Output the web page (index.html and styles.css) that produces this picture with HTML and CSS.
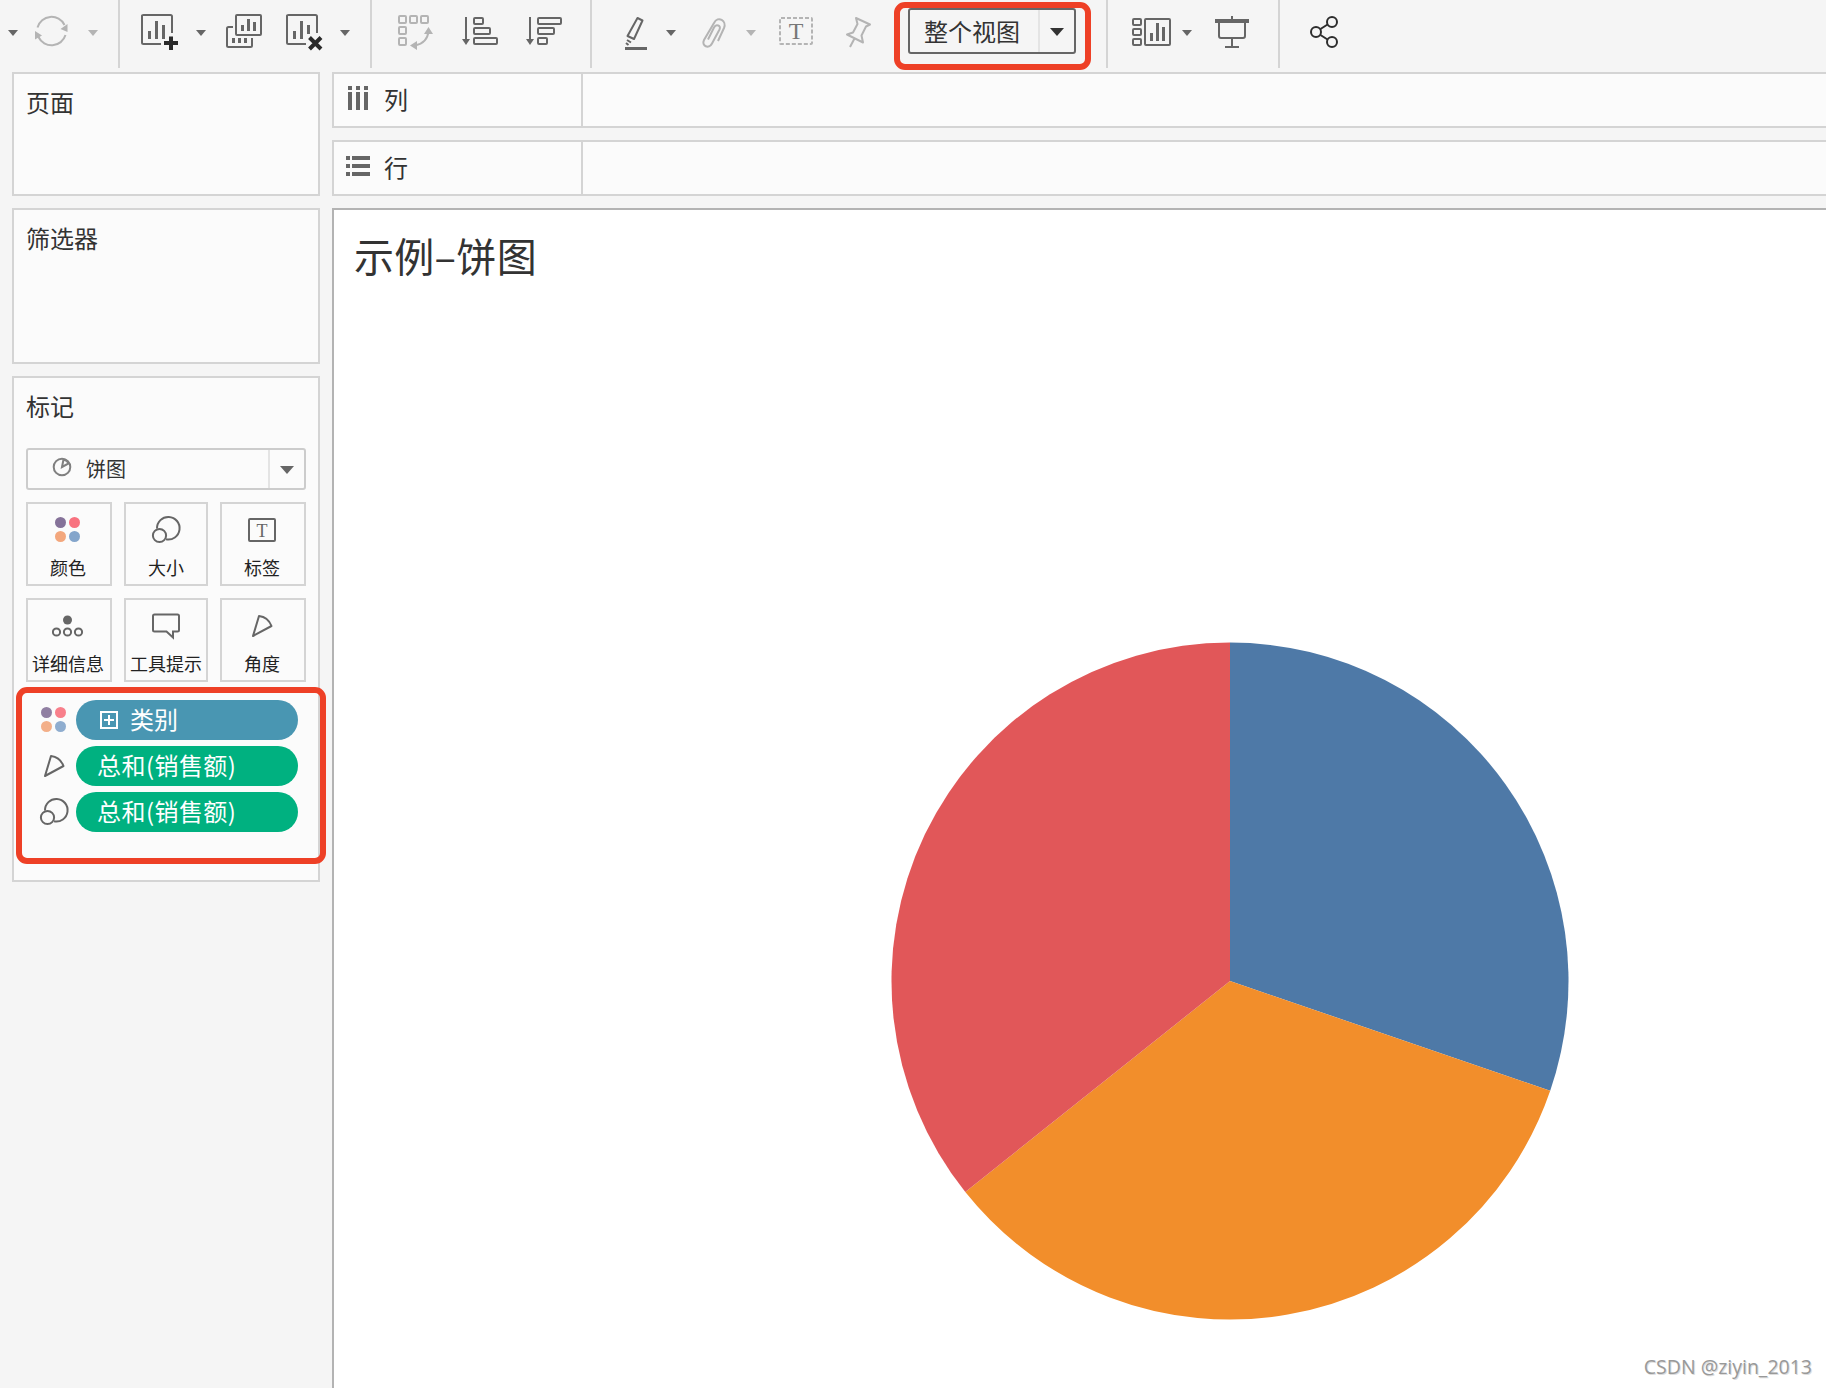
FILE: index.html
```html
<!DOCTYPE html>
<html lang="zh-CN">
<head>
  <meta charset="UTF-8" />
  <meta name="viewport" content="width=device-width, initial-scale=1.0">
  <title>示例–饼图</title>
  <link rel="stylesheet" href="styles.css">
</head>
<body>

  <div class="toolbar">
    <div class="group history">
      <span class="caret"></span>
      <svg class="icon muted" width="36" height="40" viewBox="0 0 36 40">
        <path d="M3.500 15.500A14.500 14.500 0 0 1 30.500 13M31.500 23A14.500 14.500 0 0 1 4.500 25" />
        <path class="fill" d="M26.500 17l7-5v8zM1 19v8.500l7-4z" />
      </svg>
      <span class="caret light"></span>
    </div>

    <div class="group sheets">
      <svg class="icon" width="40" height="40" viewBox="0 0 40 40">
        <path d="M21 32H3.500q-1.500 0-1.500-1.500v-27Q2 3 3.500 3h27Q32 3 32 4.500V21" />
        <path class="bars" d="M9.500 19v8M16.500 9v18M23.500 13v14" />
        <path class="dark" d="M31 24.500v13.500M24 31h14" />
      </svg>
      <span class="caret"></span>
      <svg class="icon" width="40" height="40" viewBox="0 0 40 40">
        <rect x="12" y="3" width="25" height="20" rx="1" />
        <path d="M9 15H4.500q-1.500 0-1.500 1.500v17Q3 35 4.500 35h22q1.500 0 1.500-1.500V26" />
        <path class="bars" d="M18.500 13v6M24.500 7v12M30.500 10v9M9.500 26v5M15.500 26v5M21.500 26v5" />
      </svg>
      <svg class="icon" width="40" height="40" viewBox="0 0 40 40">
        <path d="M21 32H3.500q-1.500 0-1.500-1.500v-27Q2 3 3.500 3h27Q32 3 32 4.500V21" />
        <path class="bars" d="M9.500 19v8M16.500 9v18M23.500 13v9" />
        <path class="dark" d="M24.500 25.500l11.500 11.500M36 25.500l-11.500 11.500" />
      </svg>
      <span class="caret"></span>
    </div>

    <div class="group sort">
      <svg class="icon muted" width="40" height="40" viewBox="0 0 40 40">
        <rect x="3" y="4" width="7" height="7" rx="1" />
        <rect x="14" y="4" width="7" height="7" rx="1" />
        <rect x="25" y="4" width="7" height="7" rx="1" />
        <rect x="3" y="15" width="7" height="7" rx="1" />
        <rect x="3" y="26" width="7" height="7" rx="1" />
        <path d="M32.500 19q-1 12-13.500 14.500" />
        <path class="fill" d="M28 22l4.500-7 4.500 7zM21 29v9l-7-4.500z" />
      </svg>
      <svg class="icon" width="40" height="40" viewBox="0 0 40 40">
        <path d="M6 5v23" />
        <path class="fill" d="M2 27h8l-4 6z" />
        <rect x="14" y="6" width="9" height="6" rx="1" />
        <rect x="14" y="16" width="16" height="6" rx="1" />
        <rect x="14" y="26" width="23" height="6" rx="1" />
      </svg>
      <svg class="icon" width="40" height="40" viewBox="0 0 40 40">
        <path d="M6 5v23" />
        <path class="fill" d="M2 27h8l-4 6z" />
        <rect x="14" y="6" width="23" height="6" rx="1" />
        <rect x="14" y="16" width="16" height="6" rx="1" />
        <rect x="14" y="26" width="9" height="6" rx="1" />
      </svg>
    </div>

    <div class="group format">
      <svg class="icon" width="24" height="40" viewBox="0 0 24 40">
        <path d="M13.500 6l5 2.500-8.500 18.500-6.500-3z" stroke-linejoin="round" />
        <path d="M3 28l4 2.500M2 31l2.500 2" />
        <path class="bars" d="M1 36.500h22" />
      </svg>
      <span class="caret"></span>
      <svg class="icon muted clip" width="28" height="40" viewBox="0 0 28 40">
        <path d="M18 29l6-13c3-7-6-13-10-5L4 28c-3 6 5 9.500 8 3.500l7.500-14c2-4-3.500-6-5.500-2l-6 12" />
      </svg>
      <span class="caret light"></span>
      <svg class="icon muted" width="36" height="40" viewBox="0 0 36 40">
        <rect x="2" y="6" width="32" height="26" rx="1" stroke-dasharray="4 2" />
        <text class="letter" x="18" y="27" font-size="24">T</text>
      </svg>
      <svg class="icon muted" width="28" height="40" viewBox="0 0 28 40">
        <path d="M11 6l14 6.500-4 2-4.500 9 1.500 7L2 22.500l6-2L12.500 12zM9.500 26.500L5 35" stroke-linejoin="round" />
      </svg>
      <div class="fit-select">
        <span class="fit-name">整个视图</span>
        <span class="fit-arrow"><span class="caret big"></span></span>
        <div class="mark-box"></div>
      </div>
    </div>

    <div class="group show">
      <svg class="icon" width="42" height="40" viewBox="0 0 42 40">
        <rect x="2" y="7" width="8" height="6" rx="1" />
        <rect x="2" y="17" width="8" height="6" rx="1" />
        <rect x="2" y="27" width="8" height="6" rx="1" />
        <rect x="14" y="7" width="25" height="26" rx="1" />
        <path class="bars" d="M20.500 21v8M26.500 11v18M32.500 15v14" />
      </svg>
      <span class="caret"></span>
      <svg class="icon" width="36" height="40" viewBox="0 0 36 40">
        <path d="M18 4v4M5 10v14q0 2 2 2h22q2 0 2-2V10M18 26v9M11 35h14" />
        <path d="M1 9h34" stroke-width="4" />
      </svg>
    </div>

    <div class="group share">
      <svg class="icon black" width="30" height="40" viewBox="0 0 30 40">
        <circle cx="6" cy="20" r="5" />
        <circle cx="22" cy="10" r="5" />
        <circle cx="22" cy="30" r="5" />
        <path d="M10.500 17l7-4.500M10.500 23l7 4.500" />
      </svg>
    </div>
  </div>

  <div class="workspace">
    <div class="sidebar">
      <div class="card pages"><h2>页面</h2></div>
      <div class="card filters"><h2>筛选器</h2></div>

      <div class="card marks">
        <h2>标记</h2>
        <div class="mark-type">
          <svg class="icon" width="20" height="20" viewBox="0 0 20 20">
            <circle cx="10" cy="10" r="8.300" />
            <path d="M10 10l1.500-7.500q4 1 5 4z" />
          </svg>
          <span class="type-name">饼图</span>
          <span class="type-arrow"><span class="caret big"></span></span>
        </div>

        <div class="buttons">
          <div class="btn">
            <svg class="dots" width="32" height="32" viewBox="0 0 32 32">
              <circle cx="8.500" cy="8.500" r="5.500" fill="#857299" />
              <circle cx="22.500" cy="8.500" r="5.500" fill="#f8727f" />
              <circle cx="8.500" cy="22.500" r="5.500" fill="#f3a77d" />
              <circle cx="22.500" cy="22.500" r="5.500" fill="#84a5cb" />
            </svg>
            <span>颜色</span>
          </div>
          <div class="btn">
            <svg class="icon" width="32" height="32" viewBox="0 0 32 32">
              <path d="M7 14.500A11.300 11.300 0 1 1 16 25.300" />
              <circle cx="9.500" cy="21.500" r="6.600" />
            </svg>
            <span>大小</span>
          </div>
          <div class="btn">
            <svg class="icon" width="32" height="32" viewBox="0 0 32 32">
              <rect x="3" y="5" width="26" height="22" rx="1" />
              <text x="16" y="22.500" font-size="18">T</text>
            </svg>
            <span>标签</span>
          </div>
          <div class="btn">
            <svg class="icon" width="32" height="32" viewBox="0 0 32 32">
              <circle class="fill" cx="15.500" cy="10" r="4.500" />
              <circle cx="4.500" cy="22" r="3.600" />
              <circle cx="15.500" cy="22" r="3.600" />
              <circle cx="26.500" cy="22" r="3.600" />
            </svg>
            <span>详细信息</span>
          </div>
          <div class="btn">
            <svg class="icon" width="32" height="32" viewBox="0 0 32 32">
              <path d="M4.500 4.500h23q1.500 0 1.500 1.500v14q0 1.500-1.500 1.500H23v6l-6.500-6h-12Q3 21.500 3 20V6q0-1.500 1.500-1.500z" />
            </svg>
            <span>工具提示</span>
          </div>
          <div class="btn">
            <svg class="icon" width="32" height="32" viewBox="0 0 32 32">
              <path d="M13 6q9 1 12.500 10L7 26z" stroke-linejoin="round" />
            </svg>
            <span>角度</span>
          </div>
        </div>

        <div class="pills">
          <div class="pill-row">
            <svg class="dots faded" width="32" height="32" viewBox="0 0 32 32">
              <circle cx="8.500" cy="8.500" r="5.500" fill="#857299" />
              <circle cx="22.500" cy="8.500" r="5.500" fill="#f8727f" />
              <circle cx="8.500" cy="22.500" r="5.500" fill="#f3a77d" />
              <circle cx="22.500" cy="22.500" r="5.500" fill="#84a5cb" />
            </svg>
            <div class="pill blue">
              <svg class="icon white" width="18" height="18" viewBox="0 0 18 18">
                <rect x="1" y="1" width="16" height="16" />
                <path d="M9 4v10M4 9h10" />
              </svg>
              <span>类别</span>
            </div>
          </div>
          <div class="pill-row">
            <svg class="icon" width="32" height="32" viewBox="0 0 32 32">
              <path d="M13 6q9 1 12.500 10L7 26z" stroke-linejoin="round" />
            </svg>
            <div class="pill green"><span>总和(销售额)</span></div>
          </div>
          <div class="pill-row">
            <svg class="icon" width="32" height="32" viewBox="0 0 32 32">
              <path d="M7 14.500A11.300 11.300 0 1 1 16 25.300" />
              <circle cx="9.500" cy="21.500" r="6.600" />
            </svg>
            <div class="pill green"><span>总和(销售额)</span></div>
          </div>
          <div class="mark-box"></div>
        </div>
      </div>
    </div>

    <div class="main">
      <div class="shelf">
        <div class="shelf-name">
          <svg width="26" height="28" viewBox="0 0 26 28">
            <path d="M3 0h4v4H3zM11 0h4v4h-4zM19 0h4v4h-4zM3 6h4v18H3zM11 6h4v18h-4zM19 6h4v18h-4z" />
          </svg>
          <span>列</span>
        </div>
      </div>
      <div class="shelf">
        <div class="shelf-name">
          <svg width="26" height="28" viewBox="0 0 26 28">
            <path d="M1 2h4v4H1zM7 2h18v4H7zM1 10h4v4H1zM7 10h18v4H7zM1 18h4v4H1zM7 18h18v4H7z" />
          </svg>
          <span>行</span>
        </div>
      </div>

      <div class="view">
        <h1>示例–饼图</h1>
        <svg class="pie" width="680" height="680" viewBox="-340 -340 680 680">
          <path fill="#4e79a7" d="M0 0V-338.500A338.500 338.500 0 0 1 320.200 109.800z" />
          <path fill="#f28e2b" d="M0 0L320.200 109.800A338.500 338.500 0 0 1 -264.700 211z" />
          <path fill="#e15759" d="M0 0L-264.700 211A338.500 338.500 0 0 1 0 -338.500z" />
        </svg>
        <div class="watermark">CSDN @ziyin_2013</div>
      </div>
    </div>
  </div>

</body>
</html>
```

FILE: styles.css
```css
* {
  margin: 0;
  padding: 0;
  box-sizing: border-box;
}

html, body {
  width: 100%;
  height: 100%;
  overflow: hidden;
}

body {
  display: flex;
  flex-direction: column;
  font-family: 'Noto Sans CJK SC', sans-serif;
  font-size: 24px;
  background: #f5f5f5;
  color: #333;
}

svg {
  display: block;
  flex: none;
}

.icon {
  fill: none;
  stroke: #666;
  stroke-width: 2;
}

.icon .fill {
  fill: #666;
  stroke: none;
}

.icon .bars {
  stroke-width: 3;
}

.icon .dark {
  stroke: #2a2a2a;
  stroke-width: 4;
}

.icon text {
  fill: #666;
  stroke: none;
  font-family: 'Liberation Serif', serif;
  text-anchor: middle;
}

.icon.muted {
  stroke: #b4b4b4;
}

.icon.muted .fill {
  fill: #b4b4b4;
}

.icon .letter {
  fill: #777;
}

.icon.black {
  stroke: #2d2d2d;
}

.icon.white {
  stroke: #fff;
}

.caret {
  flex: none;
  width: 10px;
  height: 6px;
  background: #666;
  clip-path: polygon(0 0, 100% 0, 50% 100%);
}

.caret.light {
  background: #b4b4b4;
}

.caret.big {
  width: 14px;
  height: 8px;
}

/* toolbar */
.toolbar {
  display: flex;
  flex: none;
  height: 72px;
}

.group {
  display: flex;
  align-items: flex-start;
  height: 68px;
  padding-top: 12px;
  border-right: 2px solid #d4d4d4;
}

.group > .caret {
  margin-top: 18px;
}

.history {
  width: 120px;
  padding-left: 8px;
  gap: 16px;
}

.history .caret.light {
  margin-left: 2px;
}

.sheets {
  width: 252px;
  padding-left: 20px;
  gap: 16px;
}

.sheets .icon + .icon {
  margin-left: 5px;
}

.sheets .icon:nth-child(3) {
  margin-left: 2px;
}

.sheets .caret:last-child {
  margin-left: -1px;
}

.sort {
  width: 220px;
  padding-left: 24px;
  gap: 24px;
}

.format {
  width: 516px;
  padding-left: 32px;
}

.format > .caret {
  margin-left: 18px;
}

.format > .icon {
  margin-left: 22px;
}

.format > .icon.clip {
  margin-left: 24px;
}

.format > .icon:first-child {
  margin-left: 0;
}

.format > .icon + .icon {
  margin-left: 31px;
}

.fit-select {
  position: relative;
  display: flex;
  width: 168px;
  height: 46px;
  margin: -4px 0 0 35px;
  border: 2px solid #666;
  border-radius: 3px;
}

.fit-name {
  flex: 1;
  padding-left: 14px;
  line-height: 41px;
}

.fit-arrow {
  display: flex;
  align-items: center;
  width: 36px;
  padding-left: 10px;
  border-left: 2px solid #e4e4e4;
}

.fit-arrow .caret {
  margin-top: 2px;
  background: #333;
}

.mark-box {
  position: absolute;
  border: 6px solid #ee4026;
  border-radius: 11px;
}

.fit-select .mark-box {
  inset: -8px -17px -18px -16px;
}

.show {
  width: 172px;
  padding-left: 23px;
}

.show .caret {
  margin: 18px 22px 0 9px;
}

.share {
  padding-left: 30px;
  border-right: none;
}

/* left side cards */
.workspace {
  display: flex;
  flex: 1;
  gap: 12px;
  padding-left: 12px;
}

.sidebar {
  display: flex;
  flex: none;
  flex-direction: column;
  gap: 12px;
  width: 308px;
}

.card {
  padding: 11px 12px;
  background: #fbfbfb;
  border: 2px solid #d4d4d4;
}

.card h2 {
  font-size: 24px;
  font-weight: 400;
  line-height: 34px;
}

.pages {
  height: 124px;
}

.filters {
  height: 156px;
}

.marks {
  height: 506px;
}

.mark-type {
  display: flex;
  align-items: center;
  height: 42px;
  margin-top: 25px;
  padding-left: 24px;
  border: 2px solid #ccc;
  border-radius: 3px;
  font-size: 20px;
}

.mark-type .icon {
  margin-top: -5px;
  stroke: #808080;
}

.type-name {
  flex: 1;
  padding: 0 0 2px 14px;
}

.type-arrow {
  display: flex;
  align-items: center;
  width: 36px;
  height: 100%;
  padding-left: 10px;
  border-left: 2px solid #e4e4e4;
}

.type-arrow .caret {
  margin-top: 2px;
}

.buttons {
  display: grid;
  grid-template-columns: 86px 84px 86px;
  grid-template-rows: 84px 84px;
  gap: 12px;
  margin-top: 12px;
}

.btn {
  display: flex;
  flex-direction: column;
  align-items: center;
  padding: 10px 2px 0 0;
  border: 2px solid #d4d4d4;
  font-size: 18px;
  line-height: 26px;
  white-space: nowrap;
  color: #222;
}

.btn svg {
  margin-bottom: 8px;
}

.btn:nth-child(3n + 2) {
  padding-right: 0;
}

.pills {
  position: relative;
  display: flex;
  flex-direction: column;
  gap: 6px;
  margin-top: 18px;
}

.pills .mark-box {
  inset: -13px -20px -32px -10px;
}

.pill-row {
  display: flex;
  align-items: center;
  gap: 6px;
  padding-left: 12px;
}

.faded {
  opacity: .9;
}

.pill {
  display: flex;
  align-items: center;
  gap: 12px;
  width: 222px;
  height: 40px;
  padding-left: 21px;
  border-radius: 20px;
  color: #fff;
}

.pill span {
  padding-bottom: 4px;
}

.blue {
  padding-left: 24px;
  background: #4996b2;
}

.green {
  background: #00b180;
  letter-spacing: .45px;
}

/* shelves and chart */
.main {
  display: flex;
  flex: 1;
  flex-direction: column;
  gap: 12px;
}

.shelf {
  flex: none;
  height: 56px;
  background: #fbfbfb;
  border: 2px solid #d4d4d4;
  border-right: none;
}

.shelf-name {
  display: flex;
  width: 249px;
  height: 100%;
  padding: 12px 0 0 11px;
  gap: 13px;
  border-right: 2px solid #d4d4d4;
  line-height: 26px;
}

.shelf-name svg {
  fill: #666;
}

.view {
  position: relative;
  flex: 1;
  background: #fff;
  border: 2px solid #b3b3b3;
  border-right: none;
  border-bottom: none;
}

.view h1 {
  padding: 16px 0 0 20px;
  font-size: 40px;
  font-weight: 400;
  line-height: 58px;
  letter-spacing: .3px;
}

.pie {
  margin: 357px 0 0 556px;
}

.watermark {
  position: absolute;
  right: 14px;
  bottom: 7px;
  font-family: 'Open Sans', 'Noto Sans', sans-serif;
  font-size: 19.5px;
  line-height: 28px;
  color: #999;
  text-shadow: 1px 1px 0 #ddd;
}
```
